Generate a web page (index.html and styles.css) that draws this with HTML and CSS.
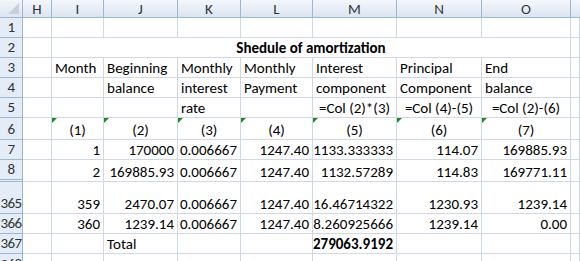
FILE: index.html
```html
<!DOCTYPE html>
<html>
<head>
<meta charset="utf-8">
<link rel="stylesheet" href="styles.css">
</head>
<body>
<div class="sheet">
  <!-- header -->
  <div class="corner"><span class="tri"></span></div>
  <div class="ch">H</div><div class="ch">I</div><div class="ch">J</div><div class="ch">K</div><div class="ch">L</div><div class="ch">M</div><div class="ch">N</div><div class="ch">O</div><div class="ch last"></div>

  <!-- row 1 -->
  <div class="rh">1</div>
  <div class="c"></div><div class="c"></div><div class="c"></div><div class="c"></div><div class="c"></div><div class="c"></div><div class="c"></div><div class="c"></div><div class="c"></div>

  <!-- row 2 -->
  <div class="rh">2</div>
  <div class="c"></div>
  <div class="c span7 ctr b">Shedule of amortization</div>
  <div class="c"></div>

  <!-- row 3 -->
  <div class="rh">3</div>
  <div class="c"></div>
  <div class="c">Month</div><div class="c">Beginning</div><div class="c">Monthly</div><div class="c">Monthly</div><div class="c">Interest</div><div class="c">Principal</div><div class="c">End</div>
  <div class="c"></div>

  <!-- row 4 -->
  <div class="rh">4</div>
  <div class="c"></div>
  <div class="c"></div><div class="c">balance</div><div class="c">interest</div><div class="c">Payment</div><div class="c">component</div><div class="c">Component</div><div class="c">balance</div>
  <div class="c"></div>

  <!-- row 5 -->
  <div class="rh">5</div>
  <div class="c"></div>
  <div class="c"></div><div class="c"></div><div class="c">rate</div><div class="c"></div><div class="c ctr">=Col (2)*(3)</div><div class="c ctr">=Col (4)-(5)</div><div class="c ctr">=Col (2)-(6)</div>
  <div class="c"></div>

  <!-- row 6 -->
  <div class="rh">6</div>
  <div class="c"></div>
  <div class="c ctr flag">(1)</div><div class="c ctr flag">(2)</div><div class="c ctr flag">(3)</div><div class="c ctr flag">(4)</div><div class="c ctr flag">(5)</div><div class="c ctr flag">(6)</div><div class="c ctr flag">(7)</div>
  <div class="c"></div>

  <!-- row 7 -->
  <div class="rh">7</div>
  <div class="c"></div>
  <div class="c r">1</div><div class="c r">170000</div><div class="c r">0.006667</div><div class="c r">1247.40</div><div class="c r">1133.333333</div><div class="c r">114.07</div><div class="c r">169885.93</div>
  <div class="c"></div>

  <!-- row 8 -->
  <div class="rh gap">8</div>
  <div class="c"></div>
  <div class="c r">2</div><div class="c r">169885.93</div><div class="c r">0.006667</div><div class="c r">1247.40</div><div class="c r">1132.57289</div><div class="c r">114.83</div><div class="c r">169771.11</div>
  <div class="c"></div>

  <!-- row 365 -->
  <div class="rh">365</div>
  <div class="c"></div>
  <div class="c r">359</div><div class="c r">2470.07</div><div class="c r">0.006667</div><div class="c r">1247.40</div><div class="c r">16.46714322</div><div class="c r">1230.93</div><div class="c r">1239.14</div>
  <div class="c"></div>

  <!-- row 366 -->
  <div class="rh">366</div>
  <div class="c"></div>
  <div class="c r">360</div><div class="c r">1239.14</div><div class="c r">0.006667</div><div class="c r">1247.40</div><div class="c r">8.260925666</div><div class="c r">1239.14</div><div class="c r">0.00</div>
  <div class="c"></div>

  <!-- row 367 -->
  <div class="rh">367</div>
  <div class="c"></div>
  <div class="c"></div><div class="c">Total</div><div class="c"></div><div class="c"></div><div class="c r b">279063.9192</div><div class="c"></div><div class="c"></div>
  <div class="c"></div>

  <!-- row 368 -->
  <div class="rh top">368</div>
  <div class="c"></div><div class="c"></div><div class="c"></div><div class="c"></div><div class="c"></div><div class="c"></div><div class="c"></div><div class="c"></div><div class="c"></div>
</div>
</body>
</html>
```
FILE: styles.css
```css
html, body {
  margin: 0;
  padding: 0;
  background: #ffffff;
  overflow: hidden;
}

.sheet {
  width: 580px;
  height: 261px;
  overflow: hidden;
  display: grid;
  grid-template-columns: 23px 29px 52px 74px 63px 72px 84px 85px 89px 9px;
  grid-template-rows: 18px 20px 20px 20px 20px 20px 22px 20px 22px 32px 20px 20px 20px;
  font-family: Calibri, Carlito, "Open Sans", "Liberation Sans", sans-serif;
  font-size: 15px;
  color: #000;
}

.corner,
.ch,
.rh,
.c {
  box-sizing: border-box;
  overflow: hidden;
  white-space: nowrap;
}

.corner {
  position: relative;
  background: linear-gradient(#f2f5fa, #dde5f1);
  border-right: 1px solid #9eb6ce;
  border-bottom: 1px solid #9eb6ce;
}

.tri {
  position: absolute;
  right: 3px;
  bottom: 3px;
  width: 0;
  height: 0;
  border-left: 11px solid transparent;
  border-bottom: 11px solid #c5cfdd;
}

.ch {
  background: linear-gradient(#f4f7fc 0%, #e7eef8 50%, #dbe4f1 100%);
  border-right: 1px solid #9eb6ce;
  border-bottom: 1px solid #9eb6ce;
  color: #333;
  display: flex;
  align-items: center;
  justify-content: center;
  padding-top: 1px;
}

.ch.last {
  border-right: none;
}

.rh {
  background: #e4ecf7;
  border-right: 1px solid #9eb6ce;
  border-bottom: 1px solid #9eb6ce;
  color: #333;
  display: flex;
  align-items: flex-end;
  justify-content: center;
  padding-bottom: 1px;
  letter-spacing: -0.6px;
}

.rh.gap {
  border-bottom: 3px double #9eb6ce;
}

.rh.top {
  align-items: flex-start;
  padding-top: 1px;
  line-height: 18px;
}

.c {
  position: relative;
  border-right: 1px solid #d0d7e5;
  border-bottom: 1px solid #d0d7e5;
  display: flex;
  align-items: flex-end;
  padding: 0 3px 0 3px;
  line-height: 18px;
}

.span7 {
  grid-column: span 7;
}

.ctr {
  justify-content: center;
}

.r {
  justify-content: flex-end;
}

.b {
  font-weight: bold;
}

.flag::before {
  content: "";
  position: absolute;
  left: 0;
  top: 0;
  width: 0;
  height: 0;
  border-top: 5px solid #1d8a1d;
  border-right: 5px solid transparent;
}
```
